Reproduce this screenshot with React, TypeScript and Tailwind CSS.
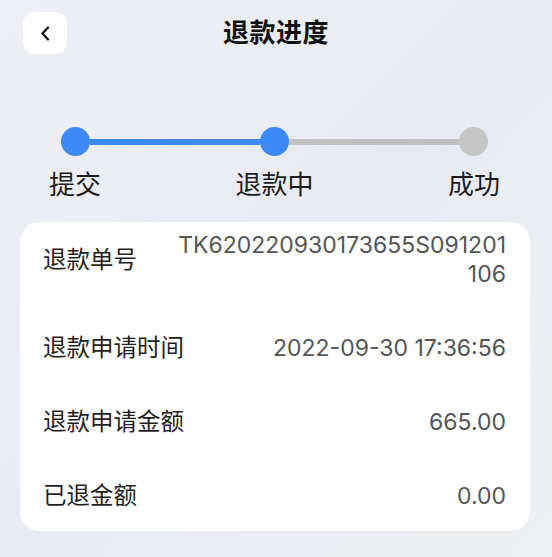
import React from 'react';

const steps = [
  { label: '提交', done: true },
  { label: '退款中', done: true },
  { label: '成功', done: false },
];

const rows = [
  { label: '退款单号', value: 'TK620220930173655S091201106' },
  { label: '退款申请时间', value: '2022-09-30 17:36:56' },
  { label: '退款申请金额', value: '665.00' },
  { label: '已退金额', value: '0.00' },
];

const font = { fontFamily: '"Liberation Sans", "Noto Sans CJK SC", sans-serif' };
const numFont = { fontFamily: 'Inter, "Liberation Sans", "Noto Sans CJK SC", sans-serif' };

export default function App() {
  return (
    <div
      className="w-[552px] h-[557px] overflow-hidden bg-gradient-to-br from-[#eef0f5] via-[#e9ebf3] to-[#eef0f3]"
      style={font}
    >
      {/* Header */}
      <div className="grid grid-cols-[1fr_auto_1fr] items-center pt-[12px] px-[23px]">
        <button className="w-[44px] h-[42px] bg-white rounded-[12px] flex items-center justify-center">
          <svg width="10" height="15" viewBox="0 0 10 15" fill="none">
            <path d="M8 1.5L2.5 7.5L8 13.5" stroke="#111" strokeWidth="2.3" strokeLinecap="round" strokeLinejoin="round" />
          </svg>
        </button>
        <h1 className="text-[26px] leading-[42px] font-bold text-[#111] tracking-[0.5px]">退款进度</h1>
        <div />
      </div>

      {/* Progress */}
      <div className="mt-[73px] ml-[61px] mr-[64px] flex items-center h-[29px]">
        {steps.map((s, i) => (
          <React.Fragment key={s.label}>
            {i > 0 && (
              <div className={`flex-1 h-[6px] ${s.done ? 'bg-[#3d8af7]' : 'bg-[#c2c2c2]'}`} />
            )}
            <div className={`w-[29px] h-[29px] rounded-full shrink-0 ${s.done ? 'bg-[#3d8af7]' : 'bg-[#c6c6c6]'}`} />
          </React.Fragment>
        ))}
      </div>
      <div className="mt-[16px] ml-[49px] mr-[52px] flex justify-between text-[26px] leading-[26px] text-[#1c1c1c]">
        {steps.map((s) => (
          <span key={s.label}>{s.label}</span>
        ))}
      </div>

      {/* Detail card */}
      <div className="mt-[24px] mx-[20px] w-[510px] bg-white rounded-[20px] pt-[9px] pb-[20px] pl-[23px] pr-[24px] flex flex-col gap-[45px]">
        {rows.map((r) => (
          <div key={r.label} className="flex items-center justify-between text-[23.5px] leading-[29px]">
            <span className="text-[#1f1f1f] shrink-0">{r.label}</span>
            <span className="text-[#555] text-right break-all max-w-[330px] text-[23px]" style={numFont}>
              {r.value}
            </span>
          </div>
        ))}
      </div>
    </div>
  );
}
